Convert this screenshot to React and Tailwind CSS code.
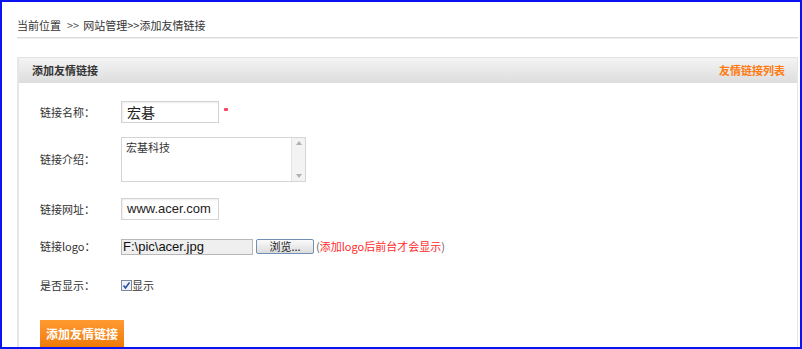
import React from "react";

const cn = "font-['Noto_Sans_CJK_SC','Liberation_Sans',sans-serif]";

function Row({ label, h, children }) {
  return (
    <div className="flex items-center" style={{ height: h }}>
      <div className="w-[81px] text-[11px] text-[#333] pl-[21px] box-content">{label}</div>
      <div className="flex items-center">{children}</div>
    </div>
  );
}

export default function App() {
  return (
    <div className={`w-[802px] h-[349px] border-2 border-[#0a14f0] overflow-hidden bg-white ${cn}`}>
      <div className="pl-[15px] pr-[2px]">
        <div className="h-[35px] flex items-end pb-[4px] text-[11px] text-[#333]">
          <span>当前位置</span>
          <span className="ml-[6px] text-[#555]">&gt;&gt;</span>
          <span className="ml-[4px]">网站管理&gt;&gt;添加友情链接</span>
        </div>
        <div className="h-[2px] bg-[#dcdcdc] border-b border-[#eeeeee]"></div>
        <div className="mt-[18px] border-l-2 border-r border-[#e6e6e6] h-[300px]">
          <div className="h-[26px] flex items-center justify-between pl-[13px] pr-[12px] border-t border-[#e2e2e2] bg-gradient-to-b from-[#f4f4f4] to-[#dddddd]">
            <span className="text-[11px] font-bold text-[#333]">添加友情链接</span>
            <span className="text-[11px] font-bold text-[#ff7a10]">友情链接列表</span>
          </div>
          <div className="pt-[12px]">
            <Row label="链接名称：" h={34}>
              <div className="w-[98px] h-[22px] border border-[#d4d4d4] shadow-[inset_1px_1px_2px_rgba(0,0,0,0.08)] flex items-center pl-[5px] text-[14px] text-[#222]">宏碁</div>
              <span className="ml-[5px] mb-[6px] w-[4px] h-[3px] bg-[#ff4060] rounded-[1px]"></span>
            </Row>
            <Row label="链接介绍：" h={61}>
              <div className="w-[185px] h-[45px] border border-[#d4d4d4] flex">
                <div className="flex-1 pl-[4px] pt-[1px] text-[11px] text-[#333]">宏基科技</div>
                <div className="w-[14px] bg-[#f3f3f3] border-l border-[#e4e4e4] flex flex-col items-center justify-between py-[3px]">
                  <svg width="6" height="4" viewBox="0 0 6 4"><path d="M0 4 L3 0 L6 4Z" fill="#b0b0b0" /></svg>
                  <svg width="6" height="4" viewBox="0 0 6 4"><path d="M0 0 L3 4 L6 0Z" fill="#b0b0b0" /></svg>
                </div>
              </div>
            </Row>
            <Row label="链接网址：" h={38}>
              <div className="w-[98px] h-[22px] border border-[#d4d4d4] shadow-[inset_1px_1px_2px_rgba(0,0,0,0.08)] flex items-center pl-[5px] text-[13px] text-[#222] font-['Liberation_Sans',sans-serif]">www.acer.com</div>
            </Row>
            <Row label="链接logo：" h={37}>
              <div className="w-[132px] h-[16px] border border-[#b8b8b8] bg-[#efefef] flex items-center pl-[1px] text-[13px] text-[#111] font-['Liberation_Sans',sans-serif] leading-none">F:\pic\acer.jpg</div>
              <div className="ml-[3px] w-[58px] h-[15px] border border-[#6f8fb3] rounded-[2px] bg-gradient-to-b from-[#fafafa] to-[#dcdcdc] flex items-center justify-center text-[11px] text-[#222] leading-none">浏览...</div>
              <span className="ml-[2px] text-[11px] text-[#ff2a2a]"><span className="text-[#666]">(</span>添加logo后前台才会显示<span className="text-[#666]">)</span></span>
            </Row>
            <Row label="是否显示：" h={40}>
              <span className="w-[11px] h-[11px] border border-[#7a8a9e] bg-[#eef2f8] flex items-center justify-center">
                <svg width="9" height="9" viewBox="0 0 9 9"><path d="M1.5 4.5 L3.5 7 L7.5 1.5" fill="none" stroke="#2a4fa8" strokeWidth="1.6" /></svg>
              </span>
              <span className="text-[11px] text-[#333]">显示</span>
            </Row>
            <div className="pl-[21px] mt-[15px]">
              <div className="w-[84px] h-[28px] bg-gradient-to-b from-[#ff9a30] to-[#f07a00] flex items-center justify-center text-[12px] font-bold text-white">添加友情链接</div>
            </div>
          </div>
        </div>
      </div>
    </div>
  );
}
